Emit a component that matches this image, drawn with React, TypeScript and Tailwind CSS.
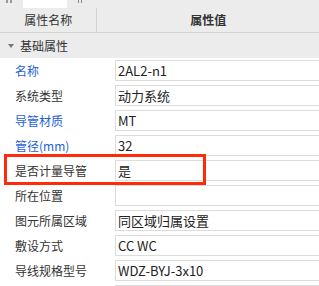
const rows: { label: string; value: string; blue?: boolean }[] = [
  { label: "名称", value: "2AL2-n1", blue: true },
  { label: "系统类型", value: "动力系统" },
  { label: "导管材质", value: "MT", blue: true },
  { label: "管径(mm)", value: "32", blue: true },
  { label: "是否计量导管", value: "是" },
  { label: "所在位置", value: "" },
  { label: "图元所属区域", value: "同区域归属设置" },
  { label: "敷设方式", value: "CC WC" },
  { label: "导线规格型号", value: "WDZ-BYJ-3x10" },
  { label: "", value: "" },
];

const font = { fontFamily: '"Noto Sans CJK SC", sans-serif' };

export default function App() {
  return (
    <div className="relative w-[319px] h-[286px] overflow-hidden bg-white text-[12px] text-[#333]" style={font}>
      {/* header */}
      <div className="relative h-[33px] bg-[#ececec] border-b border-[#d2d2d2]">
        <div className="absolute left-[6px] top-0 flex gap-[2px]">
          <span className="w-[2px] h-[3px] bg-[#999]" />
          <span className="w-[2px] h-[3px] bg-[#999]" />
        </div>
        <div className="absolute left-[23px] top-0 w-[44px] h-[8px] bg-white" />
        <div className="absolute left-[78px] top-0 flex gap-[2px]">
          <span className="w-[1px] h-[3px] bg-[#888]" />
          <span className="w-[1px] h-[3px] bg-[#888]" />
        </div>
        <div className="flex h-full pt-[8px]">
          <div className="w-[114px] flex items-center justify-center border-r border-[#d2d2d2]">属性名称</div>
          <div className="w-[260px] flex items-center justify-center font-bold text-[#333]">属性值</div>
        </div>
      </div>
      {/* group */}
      <div className="h-[25px] bg-[#ececec] flex items-center pl-[8px] gap-[6px]">
        <svg width="6" height="4" viewBox="0 0 6 4"><path d="M0 0h6L3 4z" fill="#777" /></svg>
        <span className="text-[12px]">基础属性</span>
      </div>
      <div className="h-[2px]" />
      {/* rows */}
      <div className="flex flex-col gap-[4px]">
        {rows.map((r, i) => (
          <div key={i} className="flex h-[21px]">
            <div className={`w-[115px] pl-[15px] flex items-center text-[12px] ${r.blue ? "text-[#1e62d8]" : "text-[#333]"}`}>
              {r.label}
            </div>
            <div className="flex-1 border border-r-0 border-[#dcdcdc] flex items-center pl-[2px] text-[13px] text-[#222]">
              {r.value}
            </div>
          </div>
        ))}
      </div>
      {/* highlight */}
      <div className="absolute left-[4px] top-[154px] w-[202px] h-[31px] border-[3px] border-[#ff2a0a]" />
    </div>
  );
}
